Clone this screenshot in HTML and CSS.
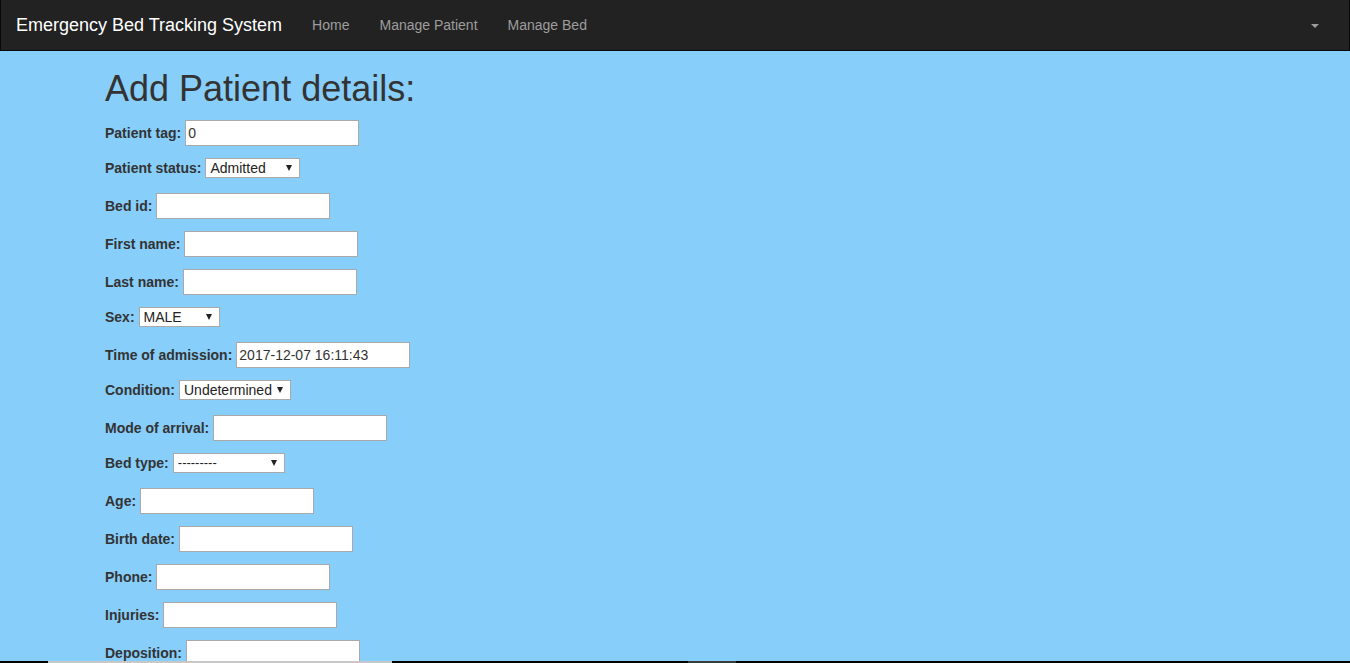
FILE: index.html
```html
<!DOCTYPE html>
<html>
<head>
<meta charset="utf-8">
<title>Emergency Bed Tracking System</title>
<link rel="stylesheet" href="styles.css">
</head>
<body>
<nav class="navbar">
  <div class="nav-inner">
    <a class="brand" href="#">Emergency Bed Tracking System</a>
    <ul class="nav-links">
      <li><a href="#">Home</a></li>
      <li><a href="#">Manage Patient</a></li>
      <li><a href="#">Manage Bed</a></li>
    </ul>
    <div class="nav-right">
      <a href="#" class="dropdown-toggle"><span class="caret"></span></a>
    </div>
  </div>
</nav>
<main class="container">
  <h1 class="title">Add Patient details:</h1>
  <form class="form">
    <div class="row"><label>Patient tag:</label><input class="field" type="text" value="0"></div>
    <div class="row sel"><label>Patient status:</label><span class="select w95"><span class="select-text">Admitted</span></span></div>
    <div class="row"><label>Bed id:</label><input class="field" type="text"></div>
    <div class="row"><label>First name:</label><input class="field" type="text"></div>
    <div class="row"><label>Last name:</label><input class="field" type="text"></div>
    <div class="row sel"><label>Sex:</label><span class="select w81"><span class="select-text">MALE</span></span></div>
    <div class="row"><label>Time of admission:</label><input class="field" type="text" value="2017-12-07 16:11:43"></div>
    <div class="row sel"><label>Condition:</label><span class="select w112"><span class="select-text">Undetermined</span></span></div>
    <div class="row"><label>Mode of arrival:</label><input class="field" type="text"></div>
    <div class="row sel"><label>Bed type:</label><span class="select w112"><span class="select-text small">---------</span></span></div>
    <div class="row"><label>Age:</label><input class="field" type="text"></div>
    <div class="row"><label>Birth date:</label><input class="field" type="text"></div>
    <div class="row"><label>Phone:</label><input class="field" type="text"></div>
    <div class="row"><label>Injuries:</label><input class="field" type="text"></div>
    <div class="row"><label>Deposition:</label><input class="field" type="text"></div>
  </form>
</main>
<div class="bottom-strip"><span class="strip-light"></span><span class="strip-dark"></span></div>
</body>
</html>
```
FILE: styles.css
```css
html, body {
  margin: 0;
  padding: 0;
}
body {
  background: #87cefa;
  font-family: "Liberation Sans", Arial, sans-serif;
  font-size: 14px;
  line-height: 20px;
  color: #333;
}
.navbar {
  background: #222;
  border: 1px solid #080808;
  border-top: 0;
  height: 50px;
}
.nav-inner {
  display: flex;
  align-items: flex-start;
  padding: 0 15px;
  height: 50px;
}
.brand {
  display: block;
  margin-left: -15px;
  padding: 15px;
  font-size: 18px;
  line-height: 20px;
  color: #fff;
  text-decoration: none;
}
.nav-links {
  display: flex;
  list-style: none;
  margin: 0;
  padding: 0;
}
.nav-links a {
  display: block;
  padding: 15px;
  color: #9d9d9d;
  text-decoration: none;
  line-height: 20px;
}
.nav-right {
  margin-left: auto;
  margin-right: 0;
}
.dropdown-toggle {
  display: flex;
  align-items: center;
  height: 20px;
  padding: 15px;
}
.caret {
  display: block;
  width: 0;
  height: 0;
  border-top: 4px solid #9d9d9d;
  border-left: 4px solid transparent;
  border-right: 4px solid transparent;
  margin-top: 1px;
}
.container {
  width: 1140px;
  margin: 0 auto;
  padding: 0 15px;
}
.title {
  margin: 18px 0 10px;
  font-size: 36px;
  line-height: 39.6px;
  font-weight: 500;
  color: #333;
}
.form {
  margin: 0;
}
.row {
  display: flex;
  align-items: center;
  gap: 4px;
  height: 28px;
  margin-bottom: 10px;
}
.row.sel {
  height: 22px;
  margin-bottom: 13px;
}
.row label {
  font-weight: bold;
}
.field {
  box-sizing: border-box;
  width: 174px;
  height: 26px;
  margin: 0;
  padding: 1px 2px;
  border: 1px solid #a9a9a9;
  background: #fff;
  font-family: "Liberation Sans", Arial, sans-serif;
  font-size: 14px;
  color: #333;
  outline: none;
}
.select {
  position: relative;
  box-sizing: border-box;
  display: flex;
  align-items: center;
  height: 20px;
  padding: 0 4px;
  border: 1px solid #a9a9a9;
  background: #fff;
  color: #222;
}
.select::after {
  content: "";
  position: absolute;
  right: 7px;
  top: 6px;
  border-top: 6px solid #222;
  border-left: 3.5px solid transparent;
  border-right: 3.5px solid transparent;
}
.select-text.small {
  font-size: 13px;
}
.w95 { width: 95px; }
.w81 { width: 81px; }
.w112 { width: 112px; }
.bottom-strip {
  position: fixed;
  left: 0;
  right: 0;
  bottom: 0;
  height: 2px;
  background: #000;
}
.strip-light {
  position: absolute;
  left: 48px;
  width: 344px;
  top: 0;
  height: 2px;
  background: #c8c8c8;
}
.strip-dark {
  position: absolute;
  left: 688px;
  width: 48px;
  top: 0;
  height: 2px;
  background: #3a3a3a;
}
```
